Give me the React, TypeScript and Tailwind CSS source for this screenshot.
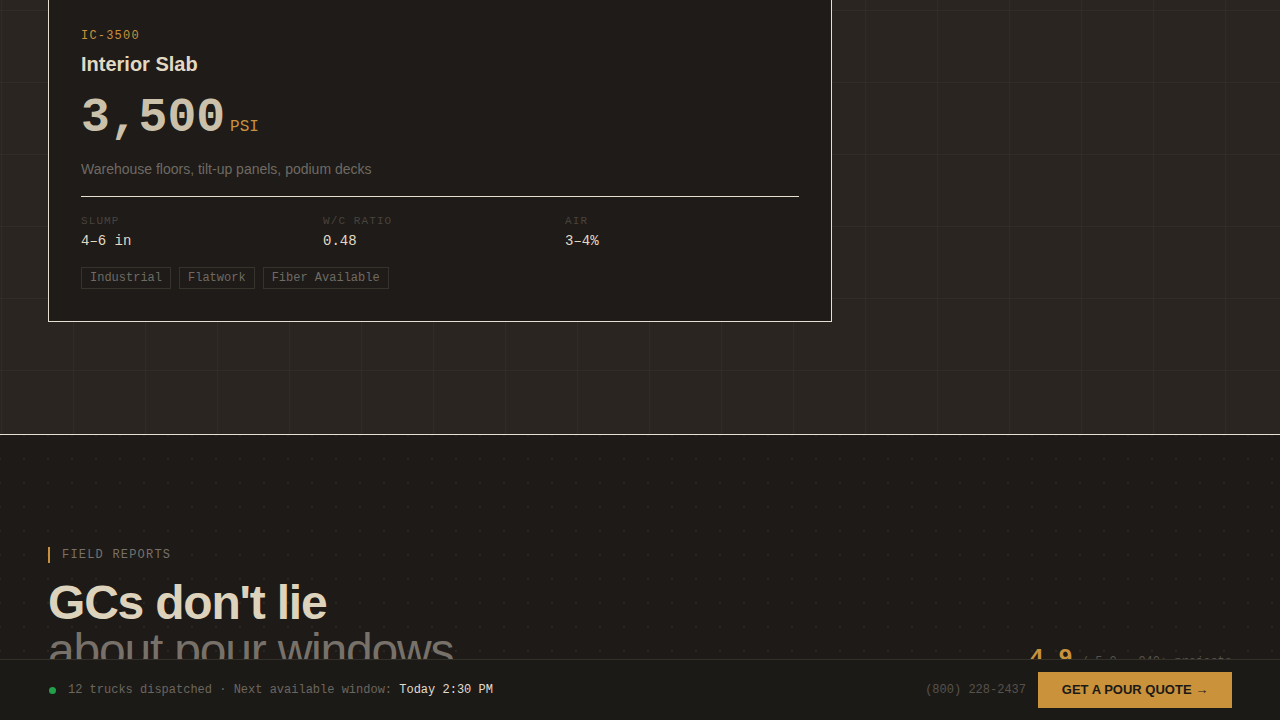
import React from 'react';

const mono = 'font-["Liberation_Mono",monospace]';
const sans = 'font-["Liberation_Sans",Arial,sans-serif]';

interface Spec {
    label: string;
    value: string;
}

interface Mix {
    code: string;
    name: string;
    psi: string;
    use: string;
    specs: Spec[];
    tags: string[];
}

const mix: Mix = {
    code: 'IC-3500',
    name: 'Interior Slab',
    psi: '3,500',
    use: 'Warehouse floors, tilt-up panels, podium decks',
    specs: [
        { label: 'Slump', value: '4–6 in' },
        { label: 'W/C Ratio', value: '0.48' },
        { label: 'Air', value: '3–4%' },
    ],
    tags: ['Industrial', 'Flatwork', 'Fiber Available'],
};

const MixCard: React.FC<{ mix: Mix }> = ({ mix }) => (
    <div className="w-[784px] border border-[#e7dfcf] bg-[#1e1b18] px-8 pt-[432px] pb-8">
        <div className={`${mono} text-[12px] leading-4 tracking-[0.1em] text-[#c9913d]`}>{mix.code}</div>
        <h3 className={`${sans} mt-[6px] text-[20px] font-bold leading-7 text-[#e3d9c3]`}>{mix.name}</h3>
        <div className="mt-[16px] flex items-baseline gap-[5px]">
            <span className={`${mono} text-[48px] font-bold leading-[48px] text-[#cbc1ab]`}>{mix.psi}</span>
            <span className={`${mono} text-[16px] leading-5 text-[#c9913d]`}>PSI</span>
        </div>
        <p className={`${sans} mt-[17px] text-[14px] leading-5 text-[#6f6a63]`}>{mix.use}</p>
        <div className="mt-[17px] grid grid-cols-3 gap-2 border-t border-[#e7dfcf] pt-4">
            {mix.specs.map((spec) => (
                <div key={spec.label}>
                    <div className={`${mono} text-[11px] uppercase leading-4 tracking-[0.1em] text-[#48433d]`}>{spec.label}</div>
                    <div className={`${mono} mt-0.5 text-[14px] leading-5 text-[#e3d9c3]`}>{spec.value}</div>
                </div>
            ))}
        </div>
        <div className="mt-4 flex gap-2">
            {mix.tags.map((tag) => (
                <span
                    key={tag}
                    className={`${mono} border border-[#36322c] px-[8px] py-[2px] text-[12px] leading-4 text-[#6f6a63]`}
                >
                    {tag}
                </span>
            ))}
        </div>
    </div>
);

const StatusBar: React.FC = () => (
    <div className="absolute inset-x-0 bottom-0 flex h-[61px] items-center justify-between border-t border-[#33302a] bg-[#1c1a17] px-12">
        <div className={`${mono} flex items-center gap-3 text-[12px] text-[#6b665f]`}>
            <span className="ml-[1px] h-[7px] w-[7px] rounded-full bg-[#22a04b]" />
            <span>
                12 trucks dispatched · Next available window: <span className="text-[#e0dccf]">Today 2:30 PM</span>
            </span>
        </div>
        <div className="flex items-center gap-3">
            <span className={`${mono} text-[12px] text-[#57524b]`}>(800) 228-2437</span>
            <button className={`${sans} h-9 w-[194px] bg-[#c9923b] text-[13px] font-bold text-[#1c1a17]`}>
                GET A POUR QUOTE →
            </button>
        </div>
    </div>
);

export default function App() {
    return (
        <div className="relative h-[720px] w-[1280px] overflow-hidden bg-[#1d1a17]">
            <div className="-mt-[517px]">
                {/* mix spec section with blueprint grid */}
                <section className="border-b border-[#e7dfcf] bg-[#2a2520] bg-[linear-gradient(to_right,#312c27_1px,transparent_1px),linear-gradient(to_bottom,#312c27_1px,transparent_1px)] bg-[size:72px_72px] bg-[position:1px_23px] px-12 py-28">
                    <MixCard mix={mix} />
                </section>

                {/* testimonials */}
                <section className="bg-[#1d1a17] bg-[radial-gradient(circle,#2b2723_1px,transparent_1.5px)] bg-[size:24px_24px] bg-[position:-12px_-12px] px-12 pt-28 pb-40">
                    <div className="flex items-end justify-between">
                        <div>
                            <div
                                className={`${mono} border-l-2 border-[#c9913d] pl-3 text-[12px] uppercase leading-4 tracking-[0.1em] text-[#77716a]`}
                            >
                                Field Reports
                            </div>
                            <h2 className={`${sans} mt-4 text-[48px] leading-[48px] tracking-tight`}>
                                <span className="block font-bold text-[#ddd2bb]">GCs don't lie</span>
                                <span className="block font-normal text-[#77716a]">about pour windows</span>
                            </h2>
                        </div>
                        <div className={`${mono} -mb-[2px] flex items-baseline gap-2`}>
                            <span className="text-[24px] font-bold text-[#c9913d]">4.9</span>
                            <span className="text-[12px] text-[#57524b]">/ 5.0 · 940+ projects</span>
                        </div>
                    </div>
                </section>
            </div>
            <StatusBar />
        </div>
    );
}
